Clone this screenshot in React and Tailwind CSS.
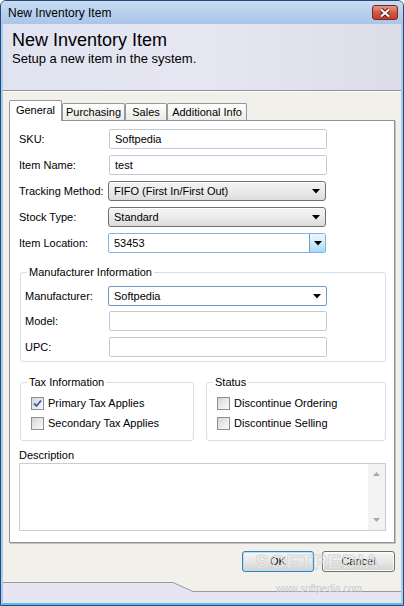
import React from 'react';

const font = { fontFamily: '"Liberation Sans", Arial, sans-serif' };

function Arrow() {
  return (
    <svg width="8" height="5" viewBox="0 0 8 5">
      <polygon points="0,0 8,0 4,4.5" fill="#000" />
    </svg>
  );
}

function TextBox({ value = '', className = '' }) {
  return (
    <div
      className={`flex h-[20px] w-[218px] items-center rounded-[2px] border border-[#c3ccd6] bg-white pl-[5px] ${className}`}
    >
      {value}
    </div>
  );
}

function Combo({ value }) {
  return (
    <div className="-ml-px flex h-[20px] w-[218px] items-center justify-between rounded-[3px] border border-[#707070] bg-gradient-to-b from-[#f3f3f3] via-[#ebebeb] to-[#dcdcdc] pl-[5px] pr-[5px] shadow-[inset_0_1px_0_#fff]">
      <span>{value}</span>
      <Arrow />
    </div>
  );
}

function Row({ label, children, labelWidth = 'w-[90px]' }) {
  return (
    <div className="flex items-center">
      <span className={labelWidth}>{label}</span>
      {children}
    </div>
  );
}

function Check({ checked, label }) {
  return (
    <div className="flex h-[13px] items-center">
      <span className="flex h-[13px] w-[13px] items-center justify-center border border-[#8e8f8f] bg-gradient-to-br from-[#d6d6d6] to-[#fbfbfb]">
        {checked && (
          <svg width="9" height="9" viewBox="0 0 9 9">
            <path d="M1 4.5 L3.5 7 L8 1.5" stroke="#3b5aa0" strokeWidth="1.8" fill="none" />
          </svg>
        )}
      </span>
      <span className="ml-[4px]">{label}</span>
    </div>
  );
}

function Group({ title, className, children }) {
  return (
    <div className={`relative rounded-[3px] border border-[#d5dfe5] ${className}`}>
      <span className="absolute -top-[8px] left-[6px] bg-white px-[2px] leading-[14px]">{title}</span>
      {children}
    </div>
  );
}

export default function App() {
  const tabs = [
    { name: 'Purchasing', w: 'w-[63px]' },
    { name: 'Sales', w: 'w-[42px]' },
    { name: 'Additional Info', w: 'w-[80px]' },
  ];

  return (
    <div
      style={font}
      className="relative flex h-[606px] w-[404px] flex-col overflow-hidden rounded-t-[6px] border border-[#27497a] bg-[#b6d0ee] text-[11px] text-black"
    >
      {/* title bar */}
      <div className="flex h-[23px] shrink-0 items-center justify-between bg-gradient-to-b from-[#c9dcf2] to-[#a9c5e8] pl-[7px] pr-[5px]">
        <span className="text-[12px]">New Inventory Item</span>
        <div className="flex h-[15px] w-[26px] items-center justify-center rounded-[3px] border border-[#76281c] bg-gradient-to-b from-[#e19a8a] via-[#cf5c45] to-[#c13c24]">
          <svg width="12" height="10" viewBox="0 0 12 10">
            <path d="M2 1.5 L10 8.5 M10 1.5 L2 8.5" stroke="#5c1a10" strokeWidth="4" />
            <path d="M2 1.5 L10 8.5 M10 1.5 L2 8.5" stroke="#fff" strokeWidth="2.2" />
          </svg>
        </div>
      </div>

      <div className="flex flex-1 flex-col border-x-2 border-b-2 border-x-[#a9cbee] border-b-[#4cc3ee]">
        {/* header */}
        <div className="h-[67px] shrink-0 border-b border-[#8f8f8f] bg-gradient-to-r from-[#e1e3f1] via-[#e6e7f2] to-[#dcdde9] pl-[9px] pt-[5px]">
          <div className="text-[18px] leading-[22px]">New Inventory Item</div>
          <div className="text-[13px] leading-[16px]">Setup a new item in the system.</div>
        </div>

        {/* body */}
        <div className="flex flex-1 flex-col border-t border-white bg-[#f1f0ea] pl-[6px] pt-[8px]">
          <div className="relative z-10 flex h-[20px] items-end">
            <div className="-mb-px flex h-[21px] w-[53px] items-center justify-center rounded-t-[2px] border border-b-0 border-[#919b9c] bg-white pb-[2px]">
              General
            </div>
            {tabs.map((t) => (
              <div
                key={t.name}
                className={`flex h-[17px] ${t.w} items-center justify-center rounded-t-[2px] border border-b-0 border-[#919b9c] bg-gradient-to-b from-white to-[#ecebe5]`}
              >
                {t.name}
              </div>
            ))}
          </div>

          <div className="flex h-[423px] w-[386px] flex-col border border-[#8a949a] bg-white pl-[9px] pt-[8px] shadow-[1px_1px_0_#c5c3b8]">
            <div className="flex flex-col gap-[6px]">
              <Row label="SKU:">
                <TextBox value="Softpedia" />
              </Row>
              <Row label="Item Name:">
                <TextBox value="test" />
              </Row>
              <Row label="Tracking Method:">
                <Combo value="FIFO (First In/First Out)" />
              </Row>
              <Row label="Stock Type:">
                <Combo value="Standard" />
              </Row>
              <Row label="Item Location:">
                <div className="-ml-px flex h-[20px] w-[218px] items-center justify-between rounded-[2px] border border-[#7eb4ea] bg-white pl-[5px]">
                  <span>53453</span>
                  <span className="flex h-[18px] w-[16px] items-center justify-center border-l border-[#6b9fd1] bg-gradient-to-b from-[#eaf6fd] via-[#d1ebfb] to-[#a8d8f6]">
                    <Arrow />
                  </span>
                </div>
              </Row>
            </div>

            <Group title="Manufacturer Information" className="ml-px mt-[19px] h-[90px] w-[366px] pl-[4px] pt-[13px]">
              <Row label="Manufacturer:" labelWidth="w-[83px]">
                <div className="flex h-[20px] w-[219px] items-center justify-between rounded-[2px] border border-[#6a9bcb] bg-white pl-[5px] pr-[5px]">
                  <span>Softpedia</span>
                  <Arrow />
                </div>
              </Row>
              <div className="mt-[5px]">
                <Row label="Model:" labelWidth="w-[84px]">
                  <TextBox className="w-[217px]" />
                </Row>
              </div>
              <div className="mt-[6px]">
                <Row label="UPC:" labelWidth="w-[84px]">
                  <TextBox className="w-[217px]" />
                </Row>
              </div>
            </Group>

            <div className="ml-px mt-[20px] flex gap-[12px]">
              <Group title="Tax Information" className="flex h-[59px] w-[174px] flex-col gap-[7px] pl-[10px] pt-[14px]">
                <Check checked label="Primary Tax Applies" />
                <Check label="Secondary Tax Applies" />
              </Group>
              <Group title="Status" className="flex h-[59px] w-[180px] flex-col gap-[7px] pl-[10px] pt-[14px]">
                <Check label="Discontinue Ordering" />
                <Check label="Discontinue Selling" />
              </Group>
            </div>

            <div className="mt-[7px] leading-[14px]">Description</div>
            <div className="mt-px flex h-[68px] w-[367px] justify-end border border-[#c9cdd2] bg-white">
              <div className="flex w-[17px] flex-col items-center justify-between bg-[#f3f3f3] py-[8px]">
                <svg width="7" height="4" viewBox="0 0 7 4">
                  <polygon points="0,4 7,4 3.5,0" fill="#a9a9a9" />
                </svg>
                <svg width="7" height="4" viewBox="0 0 7 4">
                  <polygon points="0,0 7,0 3.5,4" fill="#a9a9a9" />
                </svg>
              </div>
            </div>
          </div>

          <div className="mt-[8px] flex justify-end gap-[8px] pr-[6px]">
            <button className="h-[21px] w-[72px] rounded-[3px] border border-[#3c7fb1] bg-gradient-to-b from-[#f6f6f6] via-[#e8e8e8] to-[#d2d2d2] shadow-[inset_0_0_0_1px_#b6e0f7]">
              OK
            </button>
            <button className="h-[21px] w-[73px] rounded-[3px] border border-[#707070] bg-gradient-to-b from-[#f6f6f6] via-[#e8e8e8] to-[#d2d2d2] shadow-[inset_0_0_0_1px_#fbfbfb]">
              Cancel
            </button>
          </div>
        </div>

        {/* footer */}
        <div className="flex h-[21px] shrink-0 bg-[#f1f0ea]">
          <div className="h-full w-[170px] border-t border-[#9a9a9a] bg-[#e6e6f2]" />
          <svg width="20" height="21" viewBox="0 0 20 21" className="shrink-0">
            <polygon points="0,0 20,9 20,21 0,21" fill="#e6e6f2" />
            <polyline points="0,0.5 20,9.5" stroke="#9a9a9a" fill="none" />
          </svg>
          <div className="mt-[9px] h-[12px] flex-1 border-t border-[#9a9a9a] bg-[#e6e6f2]" />
        </div>
      </div>

      {/* softpedia watermark */}
      <span className="pointer-events-none absolute left-[254px] top-[549px] text-[21px] font-bold leading-[24px] tracking-[0.5px] text-white/30 [-webkit-text-stroke:1px_#d6d6d6]">
        SOFTPEDIA
      </span>
      <span className="pointer-events-none absolute left-[275px] top-[582px] text-[10px] leading-[11px] text-[#cacad0]">
        www.softpedia.com
      </span>
    </div>
  );
}
